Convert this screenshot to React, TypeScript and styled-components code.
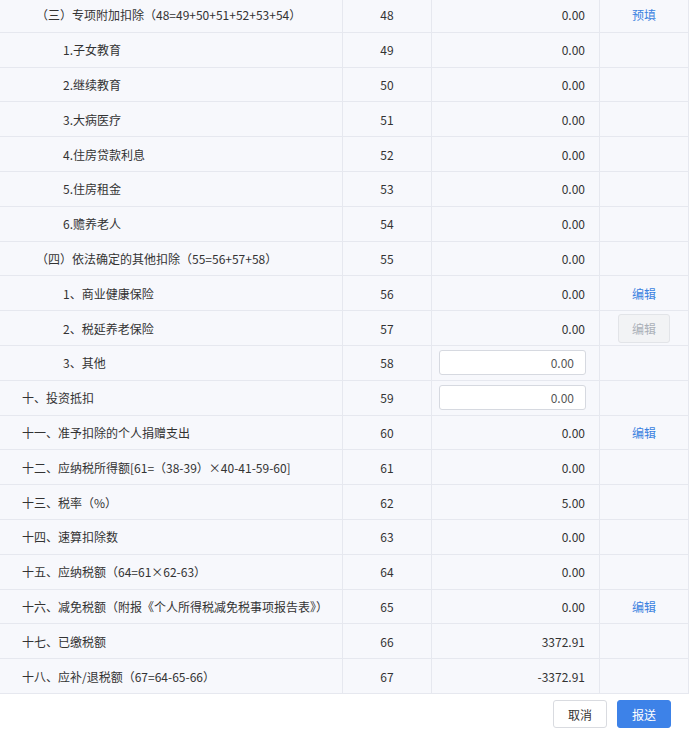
import { createGlobalStyle, styled } from 'styled-components';

const GlobalStyle = createGlobalStyle`
  body {
    margin: 0;
    background: #ffffff;
    font-family: "Noto Sans CJK SC", "Noto Sans", sans-serif;
    font-size: 12px;
    color: #333333;
  }
`;

const SPage = styled.div`
  width: 694px;
  height: 741px;
  overflow: hidden;
  display: flex;
  flex-direction: column;
`;

const STable = styled.div`
  margin-top: -2px;
  width: 688px;
  border-right: 1px solid #e6e8ef;
  background: #f7f8fc;
`;

const SRow = styled.div`
  display: grid;
  grid-template-columns: 343px 89px 168px 1fr;
  height: 34.8px;
  border-bottom: 1px solid #e6e8ef;
  box-sizing: border-box;
`;

const SCell = styled.div<{ $align?: string; $indent?: number }>`
  display: flex;
  align-items: center;
  justify-content: ${({ $align }) => $align || 'flex-start'};
  padding-left: ${({ $indent }) => $indent ?? 0}px;
  padding-right: ${({ $align }) => ($align === 'flex-end' ? 14 : 0)}px;
  border-right: 1px solid #e6e8ef;
  white-space: nowrap;

  &:last-child {
    border-right: none;
  }
`;

const SInput = styled.div`
  width: 147px;
  height: 25px;
  margin-left: -9px;
  margin-right: -1px;
  background: #fff;
  border: 1px solid #d6d9e0;
  border-radius: 3px;
  display: flex;
  align-items: center;
  justify-content: flex-end;
  padding-right: 11px;
  box-sizing: border-box;
  color: #555;
`;

const SLink = styled.span`
  color: #3b82e0;
`;

const SDisabledBtn = styled.span`
  padding: 5px 13px;
  background: #f2f3f5;
  border: 1px solid #e2e4e8;
  border-radius: 3px;
  color: #aab0b8;
`;

const SFooter = styled.div`
  flex: 1;
  width: 688px;
  display: flex;
  justify-content: flex-end;
  align-items: center;
  gap: 10px;
  padding: 0 17px 6px 0;
  box-sizing: border-box;
`;

const SButton = styled.button<{ $primary?: boolean }>`
  height: 28px;
  padding: 0 14px;
  font-family: inherit;
  font-size: 12px;
  border-radius: 3px;
  border: 1px solid ${({ $primary }) => ($primary ? '#3d82e8' : '#d9dbe0')};
  background: ${({ $primary }) => ($primary ? '#3d82e8' : '#fff')};
  color: ${({ $primary }) => ($primary ? '#fff' : '#333')};
`;

type Row = { label: string; level: number; no: number; value: string; input?: boolean; action?: 'link' | 'disabled'; text?: string };

const rows: Row[] = [
  { label: '（三）专项附加扣除（48=49+50+51+52+53+54）', level: 1, no: 48, value: '0.00', action: 'link', text: '预填' },
  { label: '1.子女教育', level: 2, no: 49, value: '0.00' },
  { label: '2.继续教育', level: 2, no: 50, value: '0.00' },
  { label: '3.大病医疗', level: 2, no: 51, value: '0.00' },
  { label: '4.住房贷款利息', level: 2, no: 52, value: '0.00' },
  { label: '5.住房租金', level: 2, no: 53, value: '0.00' },
  { label: '6.赡养老人', level: 2, no: 54, value: '0.00' },
  { label: '（四）依法确定的其他扣除（55=56+57+58）', level: 1, no: 55, value: '0.00' },
  { label: '1、商业健康保险', level: 2, no: 56, value: '0.00', action: 'link', text: '编辑' },
  { label: '2、税延养老保险', level: 2, no: 57, value: '0.00', action: 'disabled', text: '编辑' },
  { label: '3、其他', level: 2, no: 58, value: '0.00', input: true },
  { label: '十、投资抵扣', level: 0, no: 59, value: '0.00', input: true },
  { label: '十一、准予扣除的个人捐赠支出', level: 0, no: 60, value: '0.00', action: 'link', text: '编辑' },
  { label: '十二、应纳税所得额[61=（38-39）×40-41-59-60]', level: 0, no: 61, value: '0.00' },
  { label: '十三、税率（%）', level: 0, no: 62, value: '5.00' },
  { label: '十四、速算扣除数', level: 0, no: 63, value: '0.00' },
  { label: '十五、应纳税额（64=61×62-63）', level: 0, no: 64, value: '0.00' },
  { label: '十六、减免税额（附报《个人所得税减免税事项报告表》）', level: 0, no: 65, value: '0.00', action: 'link', text: '编辑' },
  { label: '十七、已缴税额', level: 0, no: 66, value: '3372.91' },
  { label: '十八、应补/退税额（67=64-65-66）', level: 0, no: 67, value: '-3372.91' },
];

const indents = [22, 36, 63];

const App = () => (
  <SPage>
    <GlobalStyle />
    <STable>
      {rows.map((r) => (
        <SRow key={r.no}>
          <SCell $indent={indents[r.level]}>{r.label}</SCell>
          <SCell $align='center'>{r.no}</SCell>
          <SCell $align='flex-end'>{r.input ? <SInput>{r.value}</SInput> : r.value}</SCell>
          <SCell $align='center'>
            {r.action === 'link' && <SLink>{r.text}</SLink>}
            {r.action === 'disabled' && <SDisabledBtn>{r.text}</SDisabledBtn>}
          </SCell>
        </SRow>
      ))}
    </STable>
    <SFooter>
      <SButton>取消</SButton>
      <SButton $primary>报送</SButton>
    </SFooter>
  </SPage>
);

export default App;
